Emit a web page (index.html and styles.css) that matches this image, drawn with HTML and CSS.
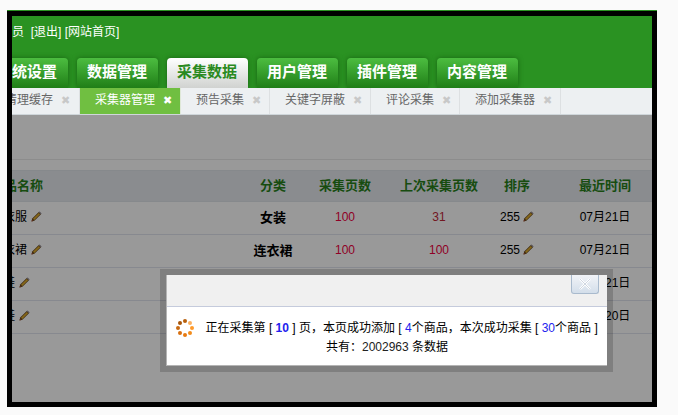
FILE: index.html
```html
<!DOCTYPE html>
<html lang="zh">
<head>
<meta charset="utf-8">
<title>采集数据</title>
<link rel="stylesheet" href="styles.css">
</head>
<body>
<svg class="defs" width="0" height="0" aria-hidden="true">
  <symbol id="pencil" viewBox="0 0 11 11">
    <path d="M0.5 10.5 L1.2 7.6 L7.8 1 L10 3.2 L3.4 9.8 Z" fill="#6b4a1e"/>
    <path d="M2 7.7 L7.8 1.9 L9.1 3.2 L3.3 9 Z" fill="#e0ae2c"/>
    <path d="M7.6 1.1 L8.6 0.4 L10.6 2.4 L9.9 3.3 Z" fill="#8a8088"/>
    <path d="M0.5 10.5 L0.9 8.8 L2.2 10.1 Z" fill="#b04a30"/>
  </symbol>
</svg>
<div class="frame">
  <header class="header">
    <div class="info">员&nbsp; [退出] [网站首页]</div>
    <nav class="nav">
      <a class="nav-item first">系统设置</a>
      <a class="nav-item">数据管理</a>
      <a class="nav-item active">采集数据</a>
      <a class="nav-item">用户管理</a>
      <a class="nav-item">插件管理</a>
      <a class="nav-item">内容管理</a>
    </nav>
  </header>
  <div class="tabs">
    <div class="tab first">清理缓存<span class="x">✖</span></div>
    <div class="tab active">采集器管理<span class="x">✖</span></div>
    <div class="tab">预告采集<span class="x">✖</span></div>
    <div class="tab">关键字屏蔽<span class="x">✖</span></div>
    <div class="tab">评论采集<span class="x">✖</span></div>
    <div class="tab">添加采集器<span class="x">✖</span></div>
  </div>
  <div class="toolbar"></div>
  <table class="grid">
    <colgroup>
      <col class="c-name"><col class="c-cat"><col class="c-pages"><col class="c-last"><col class="c-sort"><col class="c-time">
    </colgroup>
    <thead>
      <tr><th class="name">商品名称</th><th>分类</th><th>采集页数</th><th>上次采集页数</th><th>排序</th><th class="time">最近时间</th></tr>
    </thead>
    <tbody>
      <tr><td class="name">女衣服<svg class="pen"><use href="#pencil"/></svg></td><td class="cat">女装</td><td class="num">100</td><td class="num alt">31</td><td>255<svg class="pen tight"><use href="#pencil"/></svg></td><td class="time">07月21日</td></tr>
      <tr><td class="name">连衣裙<svg class="pen"><use href="#pencil"/></svg></td><td class="cat">连衣裙</td><td class="num">100</td><td class="num">100</td><td>255<svg class="pen tight"><use href="#pencil"/></svg></td><td class="time">07月21日</td></tr>
      <tr><td class="name">女鞋<svg class="pen"><use href="#pencil"/></svg></td><td></td><td></td><td></td><td></td><td class="time">07月21日</td></tr>
      <tr><td class="name">男鞋<svg class="pen"><use href="#pencil"/></svg></td><td></td><td></td><td></td><td></td><td class="time">07月20日</td></tr>
    </tbody>
  </table>
  <div class="overlay">
    <div class="dialog">
      <div class="dialog-inner">
        <div class="dialog-title">
          <button class="close" aria-label="关闭">
            <svg width="14" height="12" viewBox="0 0 14 12"><path d="M2 1 L12 11 M12 1 L2 11" stroke="#fff" stroke-width="2.4"/><path d="M2 1 L12 11 M12 1 L2 11" stroke="#c4cdd9" stroke-width="0.8"/></svg>
          </button>
        </div>
        <div class="dialog-body">
          <p class="line">
            <svg class="spin" viewBox="0 0 18 18" width="18" height="18">
              <circle cx="9" cy="2" r="2" fill="#b8600c"/>
              <circle cx="14" cy="4" r="2" fill="#fbb060"/>
              <circle cx="16" cy="9" r="2" fill="#ff9a2a"/>
              <circle cx="14" cy="14" r="2" fill="#f28c1c"/>
              <circle cx="9" cy="16" r="2" fill="#e87a10"/>
              <circle cx="4" cy="14" r="2" fill="#d87010"/>
              <circle cx="2" cy="9" r="2" fill="#c86a12"/>
              <circle cx="4" cy="4" r="2" fill="#a8560a"/>
            </svg>
            正在采集第 [ <b class="blue">10</b> ] 页，本页成功添加 [ <span class="blue">4</span>个商品，本次成功采集 [ <span class="blue">30</span>个商品 ]
          </p>
          <p class="line">共有：<span class="count">2002963</span> 条数据</p>
        </div>
      </div>
    </div>
  </div>
</div>
</body>
</html>
```

FILE: styles.css
```css
html, body {
  margin: 0;
  height: 415px;
  overflow: hidden;
  background: #fafafa;
  font: 12px/1.2 "Liberation Sans", "Noto Sans CJK SC", sans-serif;
}
.defs { position: absolute; }
.frame {
  position: relative;
  box-sizing: border-box;
  width: 650px;
  height: 396px;
  margin: 11px 0 0 7px;
  border: 5px solid #000;
  box-shadow: 0 -1px 0 #2a9222;
  overflow: hidden;
  background: #fff;
  color: #000;
}
.header { height: 72px; background: #2a9222; overflow: hidden; }
.info { height: 42px; line-height: 33px; color: #fff; }
.nav { display: flex; gap: 9px; margin-left: -25px; height: 30px; }
.nav-item {
  box-sizing: border-box;
  flex: none;
  width: 81px;
  height: 30px;
  padding-left: 10px;
  line-height: 28px;
  font-size: 15px;
  font-weight: 700;
  color: #fff;
  border-radius: 4px 4px 0 0;
  background: linear-gradient(#4cbd40, #1f7e17);
  box-shadow: 0 0 5px rgba(20, 90, 15, .8);
}
.nav-item.active {
  color: #2a8a20;
  background: linear-gradient(#fff, #d0d2d0);
}
.tabs {
  display: flex;
  height: 26px;
  background: #edf0f2;
  border-bottom: 1px solid #cfd6da;
  color: #666;
  line-height: 24px;
}
.tab {
  flex: none;
  display: flex;
  padding: 0 8px 0 15px;
  border-right: 1px solid #dde0e2;
}
.tab.first { margin-left: -22px; padding-right: 9px; }
.tab.active { background: #70bf41; color: #fff; border-right-color: #dfe8d8; }
.x {
  width: 9px;
  margin-left: 8px;
  line-height: 26px;
  font-family: "DejaVu Sans", sans-serif;
  font-size: 11px;
  color: #c8c8c8;
  text-align: center;
}
.tab.active .x { color: #fff; }
.toolbar { height: 44px; border-bottom: 1px solid #eaeaea; margin-bottom: 10px; }
.grid {
  table-layout: fixed;
  width: 661px;
  margin-left: -21px;
  border-collapse: collapse;
  border-top: 1px solid #dfe5ea;
}
.c-name { width: 249px; }
.c-cat { width: 66px; }
.c-pages { width: 78px; }
.c-last { width: 110px; }
.c-sort { width: 46px; }
.c-time { width: 112px; }
th {
  box-sizing: border-box;
  height: 31px;
  padding: 0 0 1px;
  background: #e6eaef;
  color: #287f1a;
  font-size: 13px;
  font-weight: 700;
  text-align: center;
  border-bottom: 1px solid #dfe5ea;
}
td {
  box-sizing: border-box;
  height: 33px;
  padding: 0 0 1px;
  text-align: center;
  white-space: nowrap;
  border-bottom: 1px solid #e2e5ee;
}
th.name, td.name { text-align: left; }
.time { padding-left: 18px; }
td.cat { font-size: 13px; font-weight: 700; }
.num { color: #f00040; }
.num.alt { color: #c02838; }
.pen { width: 11px; height: 11px; margin-left: 4px; vertical-align: -1px; }
.pen.tight { margin-left: 3px; }
.overlay {
  position: absolute;
  inset: 99px 0 0 0;
  background: rgba(0, 0, 0, .4);
}
.dialog {
  position: absolute;
  left: 148px;
  top: 154px;
  box-sizing: border-box;
  width: 453px;
  height: 103px;
  border: 6px solid rgba(0, 0, 0, .17);
  background: #fff;
  background-clip: padding-box;
}
.dialog-inner {
  height: 100%;
  box-sizing: border-box;
  border: 1px solid #b4b4b4;
  border-top: 0;
  border-right: 0;
  display: flex;
  flex-direction: column;
}
.dialog-title {
  flex: none;
  height: 32px;
  box-sizing: border-box;
  display: flex;
  justify-content: flex-end;
  align-items: flex-start;
  padding-right: 8px;
  background: #f0f0f0;
  border-bottom: 1px solid #c5cbdc;
}
.close {
  display: flex;
  align-items: center;
  justify-content: center;
  width: 28px;
  height: 19px;
  padding: 0;
  border: 1px solid #a9bacd;
  border-top: 0;
  border-radius: 0 0 3px 3px;
  background: linear-gradient(#f1f3f7, #d3deea);
}
.dialog-body { flex: 1; padding-top: 12px; text-align: center; }
.line { margin: 0; height: 19px; line-height: 19px; }
.spin { vertical-align: -5px; margin-right: 8px; }
.blue { color: #2222ee; }
.count { color: #222; }
```
